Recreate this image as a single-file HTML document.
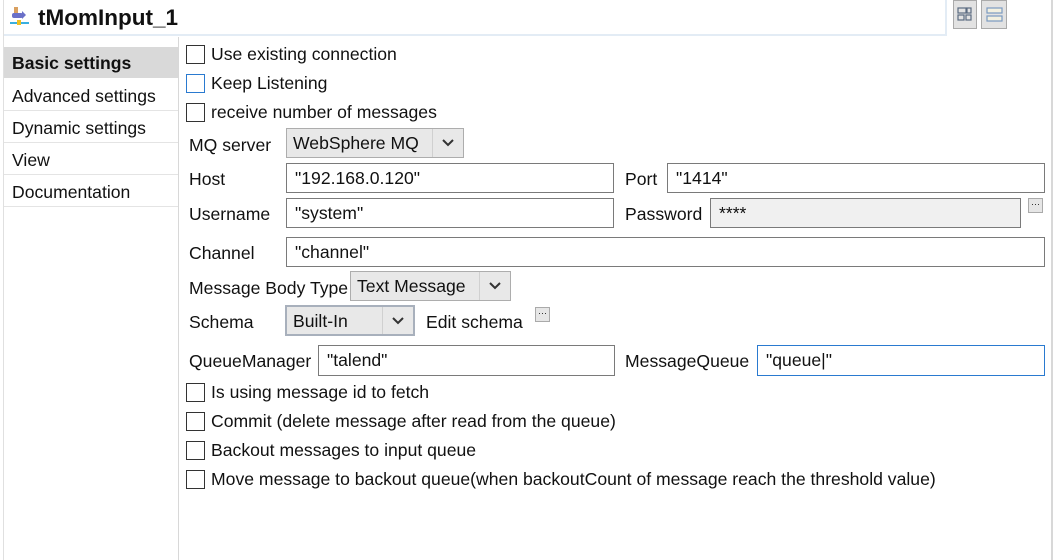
<!DOCTYPE html><html><head><style>
body{margin:0;width:1054px;height:560px;background:#fff;font-family:"Liberation Sans",sans-serif;font-size:17.6px;color:#111;position:relative;overflow:hidden}
.a{position:absolute;white-space:nowrap}
.cb{position:absolute;width:17px;height:17px;border:1px solid #333;background:#fff}
.in{position:absolute;border:1px solid #7a7a7a;background:#fff;box-sizing:border-box;padding:3px 8px;line-height:22px}
.sel{position:absolute;border:1px solid #adadad;background:#e8e8e8;box-sizing:border-box;padding:3px 6px;line-height:22px}
.sel .ar{position:absolute;right:0;top:0;bottom:0;width:30px;border-left:1px solid #d0d0d0}
.sel .ar svg{position:absolute;left:9px;top:9px}
.nav{position:absolute;left:4px;width:174px;height:31px;border-bottom:1px solid #e4e4e4;box-sizing:border-box;padding-left:8px;line-height:32px}
.db{position:absolute;width:15px;height:15px;border:1px solid #aaa;background:#e6e6e6;font-size:9px;text-align:center;line-height:10px;box-sizing:border-box}
</style></head><body>
<div class="a" style="left:3px;top:0;width:1px;height:560px;background:#e0e0e0"></div>
<div class="a" style="left:1051px;top:0;width:2px;height:560px;background:#d8d8d8"></div>
<div class="a" style="left:4px;top:34px;width:942px;height:2px;background:#e3ecf5"></div>
<div class="a" style="left:945px;top:0;width:2px;height:36px;background:#e3ecf5"></div>
<svg class="a" style="left:9px;top:7px" width="22" height="20"><rect x="5" y="0" width="4" height="8" fill="#d9a060"/><rect x="3" y="6" width="11" height="5" rx="2" fill="#6a70c8"/><polygon points="13,4 17,8 13,12" fill="#6a70c8"/><rect x="1" y="15" width="19" height="2" fill="#3ab0e0"/><rect x="8" y="13" width="4" height="5" fill="#f0c020"/></svg>
<div class="a" style="left:38px;top:5px;font-size:22.5px;font-weight:bold">tMomInput_1</div>
<div class="a" style="left:953px;top:0;width:24px;height:29px;background:#e2e2e2;border:1px solid #aaa;box-sizing:border-box"><svg width="22" height="27"><rect x="4" y="7" width="8" height="5" fill="none" stroke="#5a6a80" stroke-width="1.2"/><rect x="13" y="7" width="4" height="5" fill="none" stroke="#5a6a80" stroke-width="1.2"/><rect x="4" y="14" width="6" height="5" fill="none" stroke="#5a6a80" stroke-width="1.2"/><rect x="12" y="14" width="5" height="5" fill="none" stroke="#5a6a80" stroke-width="1.2"/></svg></div>
<div class="a" style="left:981px;top:0;width:26px;height:29px;background:#e2e2e2;border:1px solid #aaa;box-sizing:border-box"><svg width="24" height="27"><rect x="5" y="7" width="15" height="5" fill="#f3f0e0" stroke="#7a9ac0" stroke-width="1.2"/><rect x="5" y="15" width="15" height="5" fill="#f3f0e0" stroke="#7a9ac0" stroke-width="1.2"/></svg></div>
<div class="a" style="left:178px;top:37px;width:1px;height:523px;background:#d8d8d8"></div>
<div class="nav" style="top:47px;background:#d9d9d9;font-weight:bold;border:none">Basic settings</div>
<div class="nav" style="top:80px">Advanced settings</div>
<div class="nav" style="top:112px">Dynamic settings</div>
<div class="nav" style="top:144px">View</div>
<div class="nav" style="top:176px">Documentation</div>
<div class="cb" style="left:186px;top:45px"></div><div class="a" style="left:211px;top:44px">Use existing connection</div>
<div class="cb" style="left:186px;top:74px;border-color:#2a7ad0"></div><div class="a" style="left:211px;top:73px">Keep Listening</div>
<div class="cb" style="left:186px;top:103px"></div><div class="a" style="left:211px;top:102px">receive number of messages</div>
<div class="a" style="left:189px;top:135px">MQ server</div>
<div class="sel" style="left:286px;top:128px;width:178px;height:30px">WebSphere MQ<span class="ar"><svg width="12" height="10"><path d="M1 2 L6 7 L11 2" fill="none" stroke="#333" stroke-width="2"/></svg></span></div>
<div class="a" style="left:189px;top:169px">Host</div>
<div class="in" style="left:286px;top:163px;width:328px;height:30px">"192.168.0.120"</div>
<div class="a" style="left:625px;top:169px">Port</div>
<div class="in" style="left:667px;top:163px;width:378px;height:30px">"1414"</div>
<div class="a" style="left:189px;top:204px">Username</div>
<div class="in" style="left:286px;top:198px;width:328px;height:30px">"system"</div>
<div class="a" style="left:625px;top:204px">Password</div>
<div class="in" style="left:710px;top:198px;width:311px;height:30px;background:#f0f0f0">****</div>
<div class="db" style="left:1028px;top:198px">···</div>
<div class="a" style="left:189px;top:243px">Channel</div>
<div class="in" style="left:286px;top:237px;width:759px;height:30px">"channel"</div>
<div class="a" style="left:189px;top:278px">Message Body Type</div>
<div class="sel" style="left:350px;top:271px;width:161px;height:30px">Text Message<span class="ar"><svg width="12" height="10"><path d="M1 2 L6 7 L11 2" fill="none" stroke="#333" stroke-width="2"/></svg></span></div>
<div class="a" style="left:189px;top:312px">Schema</div>
<div class="sel" style="left:285px;top:305px;width:130px;height:31px;border:2px solid #a8b0bc">Built-In<span class="ar"><svg width="12" height="10"><path d="M1 2 L6 7 L11 2" fill="none" stroke="#333" stroke-width="2"/></svg></span></div>
<div class="a" style="left:426px;top:312px">Edit schema</div>
<div class="db" style="left:535px;top:307px">···</div>
<div class="a" style="left:189px;top:351px">QueueManager</div>
<div class="in" style="left:318px;top:345px;width:297px;height:31px">"talend"</div>
<div class="a" style="left:625px;top:351px">MessageQueue</div>
<div class="in" style="left:757px;top:345px;width:288px;height:31px;border-color:#2a7ad0">"queue|"</div>
<div class="cb" style="left:186px;top:383px"></div><div class="a" style="left:211px;top:382px">Is using message id to fetch</div>
<div class="cb" style="left:186px;top:412px"></div><div class="a" style="left:211px;top:411px">Commit (delete message after read from the queue)</div>
<div class="cb" style="left:186px;top:441px"></div><div class="a" style="left:211px;top:440px">Backout messages to input queue</div>
<div class="cb" style="left:186px;top:470px"></div><div class="a" style="left:211px;top:469px">Move message to backout queue(when backoutCount of message reach the threshold value)</div>
</body></html>
